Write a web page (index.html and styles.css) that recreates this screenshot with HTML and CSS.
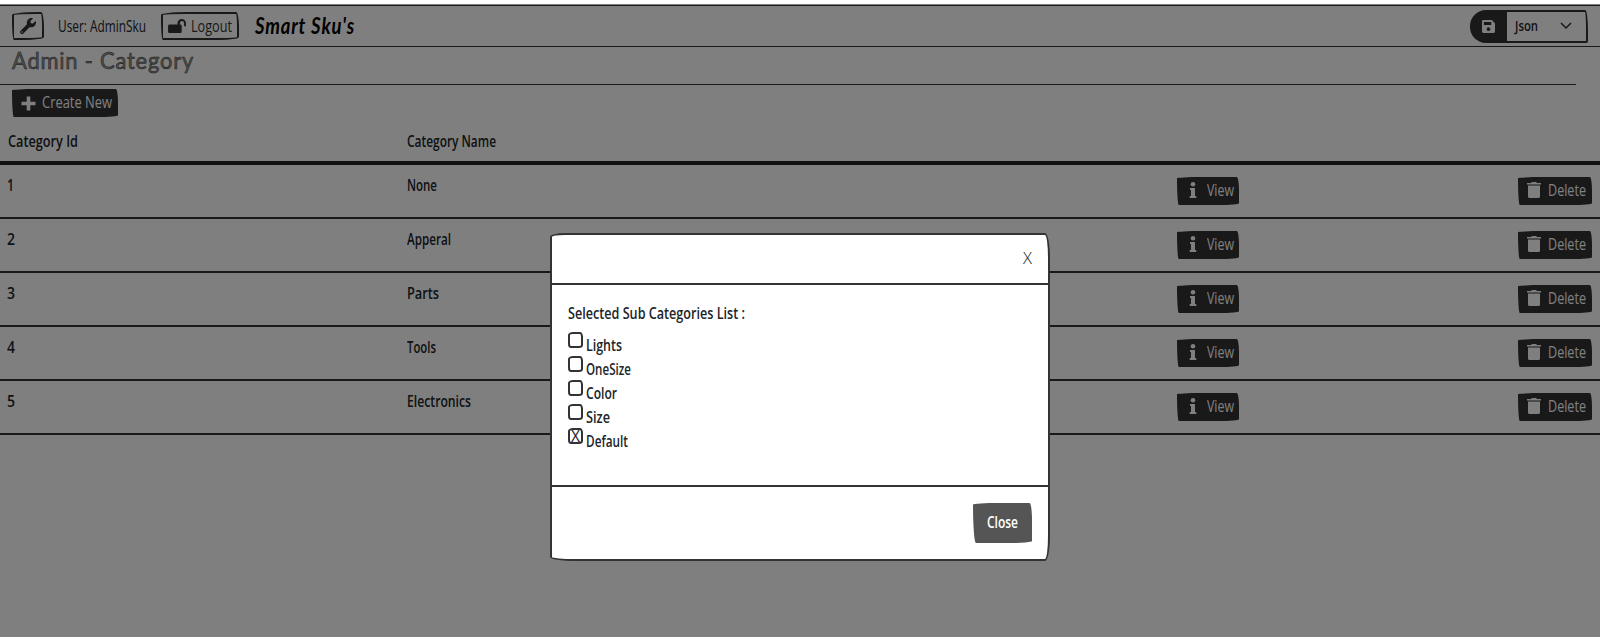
FILE: index.html
```
<!DOCTYPE html>
<html lang="en">
<head>
<meta charset="utf-8">
<title>Admin - Category</title>
<link rel="stylesheet" href="styles.css">
</head>
<body>
<svg class="defs" width="0" height="0">
  <symbol id="trash" viewBox="0 0 14 16"><path d="M0 1h4l1-1h4l1 1h4v1.500H0zM1 3.500h12v11q0 1.500-1.500 1.500h-9Q1 16 1 14.500z"/></symbol>
  <symbol id="info" viewBox="0 0 8 16"><circle cx="4" cy="2.300" r="2.300"/><path d="M1 6h5v8h1.300v2H.700v-2H2V8H1z"/></symbol>
</svg>
<header class="navbar">
  <button class="tool"><svg width="16" height="16" viewBox="0 0 512 512"><path d="M507.700 109c-2-9-13-12-20-5l-74 74-68-11-11-68 74-74c7-7 4-18-5-20-50-12-104 1-143 40-42 42-53 102-37 154L19 404c-25 25-25 65 0 90s65 25 90 0l204-205c52 17 112 6 154-36 39-39 52-94 40-144zM64 472a24 24 0 1 1 0-48 24 24 0 0 1 0 48z"/></svg></button>
  <span class="user"><span class="fit light" data-w="88">User: AdminSku</span></span>
  <button class="logout"><svg width="18" height="16" viewBox="0 0 19 17"><path d="M2 7h8V5.500a4.500 4.500 0 0 1 9 0V8q0 1-1 1t-1-1V5.500a2.200 2.200 0 0 0-4.400 0V7h.4q1.500 0 1.500 1.500v6q0 1.500-1.500 1.500H1.500Q0 16 0 14.500v-6Q0 7 1.500 7z"/></svg><span class="fit light" data-w="41">Logout</span></button>
  <span class="brand"><span class="fit" data-w="100">Smart Sku's</span></span>
  <div class="export">
    <div class="save"><svg width="13" height="13" viewBox="0 0 14 14"><path fill-rule="evenodd" d="M1.500 0H10.500L14 3.500v9q0 1.500-1.500 1.500h-11Q0 14 0 12.500v-11Q0 0 1.500 0zM2 2.200v3.300h8V2.200zM7 7.800a2 2 0 1 0 .01 0z"/></svg></div>
    <div class="format"><span class="fit" data-w="23">Json</span><svg width="12" height="8" viewBox="0 0 12 8"><path d="M1 1l5 5 5-5"/></svg></div>
  </div>
</header>
<main>
  <h1><span class="fit" data-w="182">Admin - Category</span></h1>
  <button class="dark create"><svg width="15" height="15" viewBox="0 0 15 15"><path d="M5.700 .500h3.600v5.200h5.200v3.600H9.300v5.200H5.700V9.300H.500V5.700h5.200z"/></svg><span class="fit light" data-w="70">Create New</span></button>
  <div class="row head"><span><span class="fit" data-w="70">Category Id</span></span><span><span class="fit" data-w="89">Category Name</span></span></div>
  <div class="row"><span class="id"><span class="fit" data-w="7">1</span></span><span><span class="fit" data-w="30">None</span></span><button class="dark view"><svg width="8" height="16"><use href="#info"/></svg><span class="fit light" data-w="27">View</span></button><button class="dark delete"><svg width="14" height="16"><use href="#trash"/></svg><span class="fit light" data-w="38">Delete</span></button></div>
  <div class="row"><span class="id"><span class="fit" data-w="8">2</span></span><span><span class="fit" data-w="44">Apperal</span></span><button class="dark view"><svg width="8" height="16"><use href="#info"/></svg><span class="fit light" data-w="27">View</span></button><button class="dark delete"><svg width="14" height="16"><use href="#trash"/></svg><span class="fit light" data-w="38">Delete</span></button></div>
  <div class="row"><span class="id"><span class="fit" data-w="8">3</span></span><span><span class="fit" data-w="32">Parts</span></span><button class="dark view"><svg width="8" height="16"><use href="#info"/></svg><span class="fit light" data-w="27">View</span></button><button class="dark delete"><svg width="14" height="16"><use href="#trash"/></svg><span class="fit light" data-w="38">Delete</span></button></div>
  <div class="row"><span class="id"><span class="fit" data-w="8">4</span></span><span><span class="fit" data-w="29">Tools</span></span><button class="dark view"><svg width="8" height="16"><use href="#info"/></svg><span class="fit light" data-w="27">View</span></button><button class="dark delete"><svg width="14" height="16"><use href="#trash"/></svg><span class="fit light" data-w="38">Delete</span></button></div>
  <div class="row"><span class="id"><span class="fit" data-w="8">5</span></span><span><span class="fit" data-w="64">Electronics</span></span><button class="dark view"><svg width="8" height="16"><use href="#info"/></svg><span class="fit light" data-w="27">View</span></button><button class="dark delete"><svg width="14" height="16"><use href="#trash"/></svg><span class="fit light" data-w="38">Delete</span></button></div>
</main>
<div class="backdrop"></div>
<section class="modal">
  <div class="modal-header"><span class="fit thin" data-w="9">X</span></div>
  <div class="modal-body">
    <p><span class="fit" data-w="177">Selected Sub Categories List :</span></p>
    <label><i class="box"></i><span class="fit" data-w="36">Lights</span></label>
    <label><i class="box"></i><span class="fit" data-w="45">OneSize</span></label>
    <label><i class="box"></i><span class="fit" data-w="31">Color</span></label>
    <label><i class="box"></i><span class="fit" data-w="24">Size</span></label>
    <label><i class="box"><span class="fit light" data-w="9">X</span></i><span class="fit" data-w="42">Default</span></label>
  </div>
  <div class="modal-footer"><button class="close"><span class="fit" data-w="31">Close</span></button></div>
</section>
<script src="fit.js"></script>
</body>
</html>
```

FILE: styles.css
```
* { box-sizing: border-box; }
body { margin: 0; height: 637px; overflow: hidden; background: #fff; color: #212529; font: 600 16.5px/24px "Open Sans", sans-serif; }
button { font: inherit; padding: 0; color: inherit; cursor: pointer; }
svg { fill: currentColor; flex: none; }
.defs { position: absolute; }
.fit { display: inline-block; white-space: nowrap; transform-origin: 0 50%; }
.light { font-weight: 400; }
.thin { font-weight: 300; }

.navbar { height: 42px; margin-top: 5px; padding: 0 12px; display: flex; align-items: center; border-top: 1px solid #333; border-bottom: 1px solid #333; }
.tool, .logout { height: 28px; background: none; border: 2px solid #333; border-radius: 25px 3px 20px 2px / 3px 15px 3px 20px; display: flex; align-items: center; justify-content: center; color: #333; }
.tool { width: 32px; margin-right: 14px; }
.user { width: 103px; padding-bottom: 1px; }
.logout { width: 78px; gap: 5px; }
.logout .fit { margin-top: -1px; }
.brand { margin-left: 16px; color: #000; font: italic 700 22px/30px "Lato", sans-serif; letter-spacing: 1px; }
.export { margin-left: auto; width: 118px; height: 33px; display: flex; }
.save { width: 37px; padding-left: 12px; display: flex; align-items: center; background: #333; color: #fff; border-radius: 16px 0 0 16px; }
.format { flex: 1; padding: 0 14px 0 8px; display: flex; align-items: center; justify-content: space-between; border: 2px solid #333; border-left: 0; border-radius: 0 3px 2px 0 / 0 20px 2px 0; font-size: 14px; }
.format svg { fill: none; stroke: #333; stroke-width: 1.5; }

h1 { margin: 0 24px 0 0; height: 38px; padding-left: 12px; border-bottom: 1px solid #333; font: 400 23px/26px "Lato", sans-serif; letter-spacing: .8px; color: #999; -webkit-text-stroke: .5px #333; }
.dark { height: 28px; display: flex; align-items: center; border: 0; background: #333; color: #fff; border-radius: 55px 5px 45px 4px / 3px 30px 4px 60px; }
.dark .fit { margin-top: -2px; }
.create { width: 106px; margin: 4px 0 0 12px; padding-left: 9px; gap: 6px; }
.row { height: 54px; padding: 8px; display: grid; grid-template-columns: 399px 770px 341px 74px; border-bottom: 2px solid #333; }
.row > .id { margin-left: -1px; }
.row > .dark { margin-top: 4px; }
.head { height: 48px; padding-top: 12px; border-bottom: 4px solid #212529; }
.view { width: 62px; padding-left: 12px; gap: 10px; }
.delete { width: 74px; padding-left: 9px; gap: 7px; }
.dark.view svg, .dark.delete svg { margin-top: -2px; }

.backdrop { position: fixed; inset: 4px 0 0; background: rgba(0, 0, 0, .5); }
.modal { position: fixed; left: 550px; top: 233px; width: 500px; height: 328px; display: flex; flex-direction: column; background: #fff; border: 2px solid #333; border-radius: 15px 5px 5px 25px / 4px 25px 25px 4px; }
.modal-header { height: 50px; padding: 0 16px 2px; display: flex; justify-content: flex-end; align-items: center; border-bottom: 2px solid #333; }
.modal-body { flex: 1; padding: 16px; }
.modal-body p { margin: 0 0 6px; }
.modal-body label { height: 24px; display: flex; align-items: flex-start; }
.modal-body label > .fit { margin-top: 2px; }
.box { width: 15px; height: 16px; margin: 1px 3px 0 0; flex: none; display: flex; align-items: center; justify-content: center; border: 2px solid #333; border-radius: 5px 3px 4px 3px / 3px 5px 3px 4px; font-style: normal; }
.modal-footer { height: 74px; padding: 16px; display: flex; justify-content: flex-end; border-top: 2px solid #333; }
.close { width: 59px; height: 40px; padding-bottom: 2px; border: 0; background: #555; color: #fff; border-radius: 55px 5px 45px 6px / 3px 35px 4px 80px; }
```

FILE: fit.js
```
// Condense each label to the width given in its data-w attribute.
document.querySelectorAll('.fit').forEach(function (el) {
  var natural = el.getBoundingClientRect().width;
  var wanted = Number(el.dataset.w);
  el.style.transform = 'scaleX(' + wanted / natural + ')';
  el.style.marginRight = (wanted - natural) + 'px';
});
```
